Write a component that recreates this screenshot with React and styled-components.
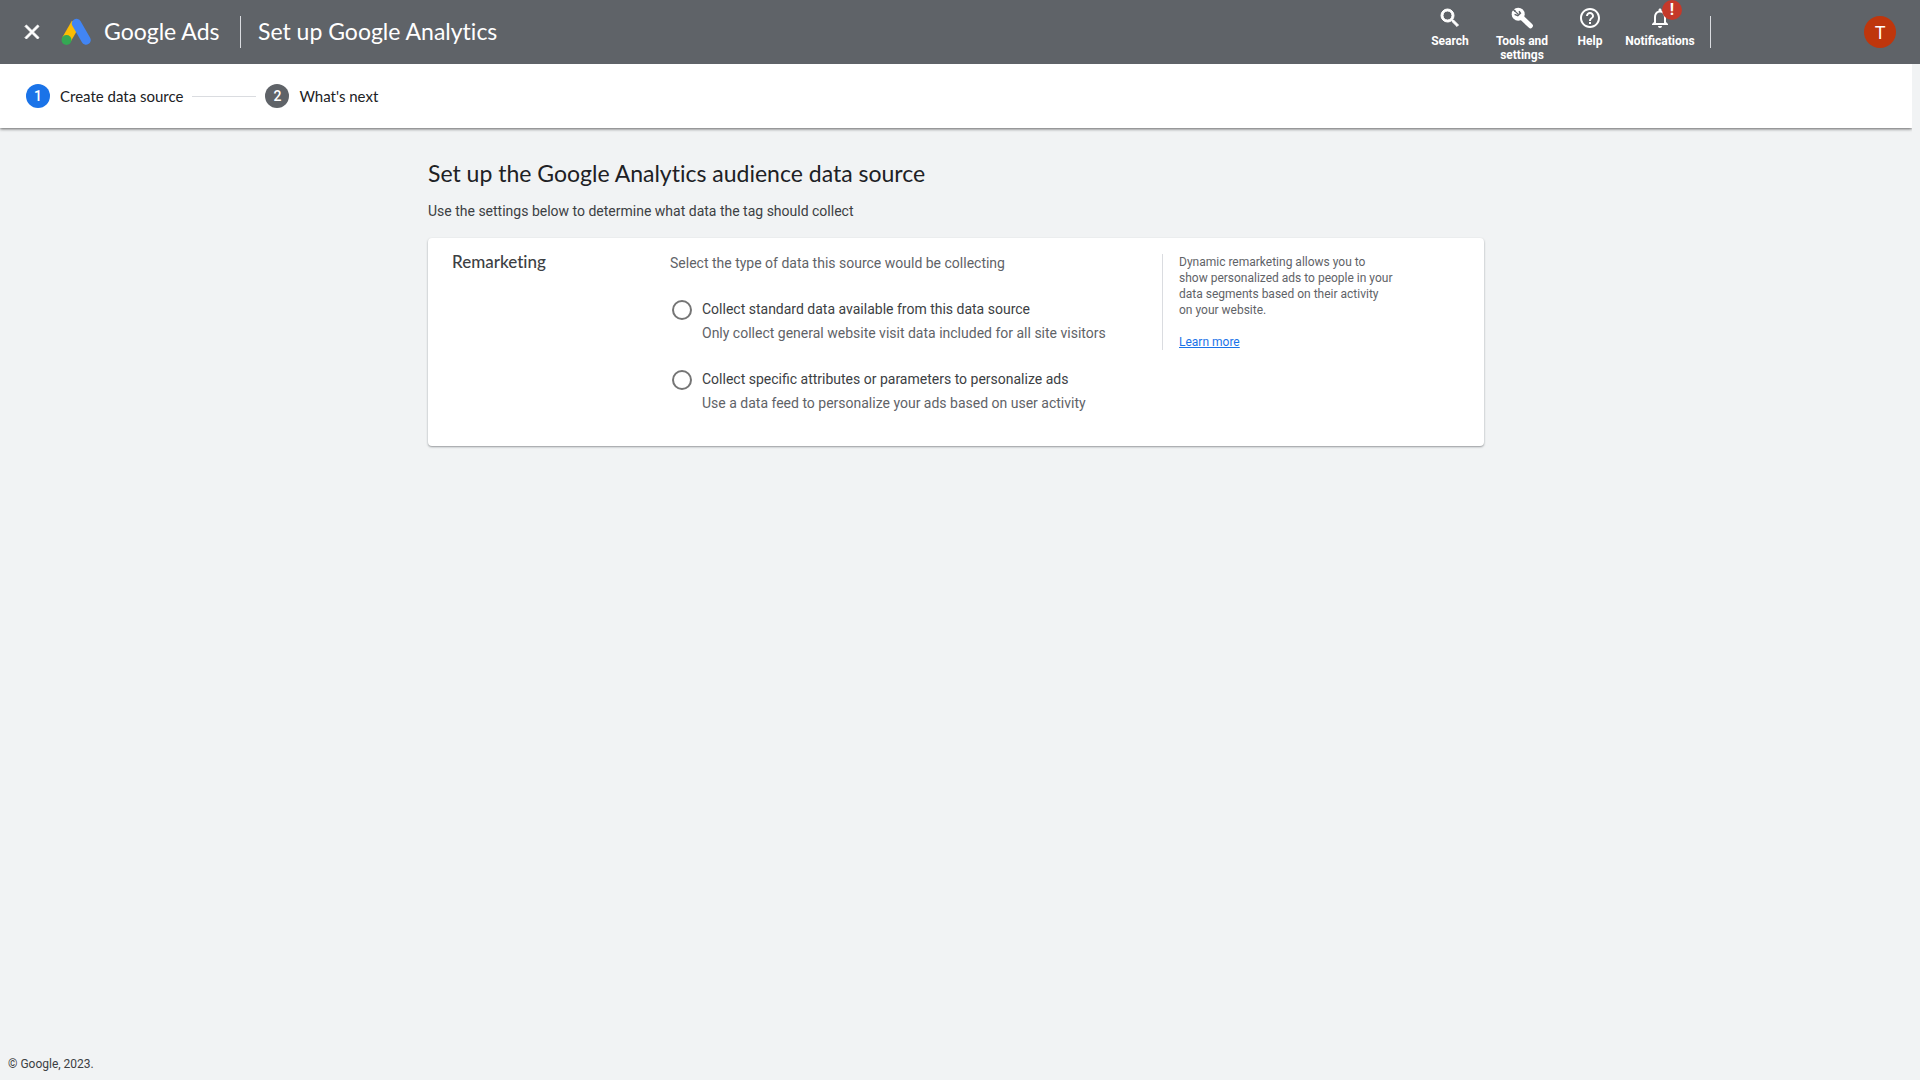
import React from "react";
import styled, { createGlobalStyle, css } from "styled-components";
import {
  MdClose,
  MdSearch,
  MdHelpOutline,
  MdNotificationsNone,
} from "react-icons/md";

const options = [
  {
    id: "standard",
    title: "Collect standard data available from this data source",
    text: "Only collect general website visit data included for all site visitors",
  },
  {
    id: "specific",
    title: "Collect specific attributes or parameters to personalize ads",
    text: "Use a data feed to personalize your ads based on user activity",
  },
];

function AdsLogo() {
  return (
    <svg width="30" height="28" viewBox="0 0 30 28" aria-hidden="true">
      <path d="M15 5 5.500 21.500" stroke="#fbbc04" strokeWidth="9.500" />
      <path
        d="M15.500 5.500 25 22"
        stroke="#4285f4"
        strokeWidth="9.500"
        strokeLinecap="round"
      />
      <circle cx="5.500" cy="22" r="5" fill="#34a853" />
    </svg>
  );
}

function WrenchIcon() {
  return (
    <svg width="24" height="24" viewBox="0 0 24 24" fill="none">
      <circle cx="8.200" cy="8.200" r="6.500" fill="currentColor" />
      <path
        d="M9 9 20.400 19.800"
        stroke="currentColor"
        strokeWidth="5"
        strokeLinecap="round"
      />
      <path
        d="M2 2.500 5.400 5.400M4.600 8.400 7.800 9.600 10.400 7.200 9 5.200"
        stroke="#5f6368"
        strokeWidth="1.500"
      />
      <path d="M4.300 4.600 8.300 8.200" stroke="#5f6368" strokeWidth="1.200" />
    </svg>
  );
}

function Header() {
  return (
    <TopBar>
      <CloseButton aria-label="Close">
        <CloseIcon size={24} />
      </CloseButton>
      <Brand href="#">
        <AdsLogo />
        <BrandName>Google Ads</BrandName>
      </Brand>
      <Divider />
      <PageTitle>Set up Google Analytics</PageTitle>
      <Tools>
        <ToolButton $width={72}>
          <SearchIcon size={24} />
          Search
        </ToolButton>
        <ToolButton $width={72}>
          <WrenchIcon />
          Tools and settings
        </ToolButton>
        <ToolButton $width={64}>
          <MdHelpOutline size={24} />
          Help
        </ToolButton>
        <ToolButton $width={76}>
          <MdNotificationsNone size={24} />
          <Badge>!</Badge>
          Notifications
        </ToolButton>
      </Tools>
      <Divider />
      <Avatar aria-label="Account">T</Avatar>
    </TopBar>
  );
}

function Steps() {
  return (
    <StepBar>
      <Step>
        <StepNumber $active>1</StepNumber>
        <StepLabel>Create data source</StepLabel>
      </Step>
      <StepLine />
      <Step>
        <StepNumber>2</StepNumber>
        <StepLabel>What's next</StepLabel>
      </Step>
    </StepBar>
  );
}

export default function App() {
  return (
    <Page>
      <GlobalStyle />
      <Header />
      <Body>
        <Steps />
        <Content>
          <Heading>Set up the Google Analytics audience data source</Heading>
          <Intro>
            Use the settings below to determine what data the tag should collect
          </Intro>
          <Card>
            <CardTitle>Remarketing</CardTitle>
            <Fields>
              <Legend id="data-type">
                Select the type of data this source would be collecting
              </Legend>
              <Options role="radiogroup" aria-labelledby="data-type">
                {options.map((option) => (
                  <Option key={option.id} htmlFor={option.id}>
                    <Radio type="radio" name="data-type" id={option.id} />
                    <OptionText>
                      <OptionTitle>{option.title}</OptionTitle>
                      <span>{option.text}</span>
                    </OptionText>
                  </Option>
                ))}
              </Options>
            </Fields>
            <Help>
              <p>
                Dynamic remarketing allows you to
                <br />
                show personalized ads to people in your
                <br />
                data segments based on their activity
                <br />
                on your website.
              </p>
              <a href="#">Learn more</a>
            </Help>
          </Card>
        </Content>
        <Footer>© Google, 2023.</Footer>
      </Body>
    </Page>
  );
}

const GlobalStyle = createGlobalStyle`
  * {
    box-sizing: border-box;
  }

  body {
    margin: 0;
    background: #f1f3f4;
    color: #3c4043;
    font-family: Roboto, "Liberation Sans", sans-serif;
    font-size: 14px;
  }

  h1, h2, h3, p {
    margin: 0;
    font-weight: 400;
  }

  button {
    border: 0;
    padding: 0;
    background: none;
    color: inherit;
    font-family: inherit;
    cursor: pointer;
  }
`;

const displayFont = css`
  font-family: "Google Sans", Lato, sans-serif;
  font-variant-ligatures: none;
`;

/* thickens the glyph but not the empty bounding path */
const boldIcon = css`
  path:not([fill="none"]) {
    stroke-width: 1;
  }
`;

const CloseIcon = styled(MdClose)`
  ${boldIcon}
`;

const SearchIcon = styled(MdSearch)`
  ${boldIcon}
`;

const Page = styled.div`
  min-height: 100vh;
  display: flex;
  flex-direction: column;
`;

const TopBar = styled.header`
  height: 64px;
  padding: 0 24px 0 20px;
  display: flex;
  align-items: center;
  background: #5f6368;
  color: #fff;
`;

const CloseButton = styled.button`
  width: 24px;
  height: 24px;
  flex: none;
`;

const Brand = styled.a`
  margin-left: 17px;
  width: 179px;
  display: flex;
  align-items: center;
  gap: 13px;
  color: #fff;
  text-decoration: none;
`;

const BrandName = styled.span`
  ${displayFont}
  padding-bottom: 2px;
  font-size: 23px;
  white-space: nowrap;
`;

const Divider = styled.div`
  width: 1px;
  height: 32px;
  background: #dadce0;
`;

const PageTitle = styled.h1`
  ${displayFont}
  margin-left: 17px;
  padding-bottom: 2px;
  font-size: 23px;
  white-space: nowrap;
`;

const Tools = styled.nav`
  margin-left: auto;
  margin-right: 12px;
  height: 100%;
  display: flex;
`;

const ToolButton = styled.button`
  position: relative;
  width: ${(props) => props.$width}px;
  height: 100%;
  padding-top: 6px;
  display: flex;
  flex-direction: column;
  align-items: center;
  gap: 4px;
  font-size: 12px;
  font-weight: 700;
  line-height: 14px;

  svg {
    flex: none;
  }
`;

const Badge = styled.span`
  position: absolute;
  top: 0;
  right: 16px;
  width: 20px;
  height: 20px;
  border-radius: 50%;
  background: #c5392a;
  font-size: 16px;
  line-height: 20px;
`;

const Avatar = styled.button`
  margin-left: 153px;
  width: 32px;
  height: 32px;
  flex: none;
  border-radius: 50%;
  background: #bf360c;
  font-size: 18px;
`;

const Body = styled.div`
  flex: 1;
  margin-right: 8px;
  display: flex;
  flex-direction: column;
`;

const StepBar = styled.nav`
  height: 64px;
  padding: 0 26px;
  display: flex;
  align-items: center;
  gap: 9px;
  background: #fff;
  box-shadow: 0 1px 3px rgba(0, 0, 0, 0.6);
  clip-path: inset(0 0 -8px 0);
`;

const Step = styled.div`
  display: flex;
  align-items: center;
  gap: 10px;
`;

const StepNumber = styled.span`
  width: 24px;
  height: 24px;
  border-radius: 50%;
  background: ${(props) => (props.$active ? "#1a73e8" : "#5f6368")};
  color: #fff;
  font-weight: 500;
  line-height: 24px;
  text-align: center;
`;

const StepLabel = styled.span`
  ${displayFont}
  color: #202124;
  font-size: 15px;
`;

const StepLine = styled.div`
  width: 64px;
  height: 1px;
  background: #dadce0;
`;

const Content = styled.main`
  width: 100%;
  max-width: 1056px;
  margin: 0 auto;
  padding-top: 31px;
`;

const Heading = styled.h2`
  ${displayFont}
  color: #202124;
  font-size: 23px;
  line-height: 28px;
`;

const Intro = styled.p`
  padding: 13px 0 16px;
  line-height: 22px;
`;

const Card = styled.section`
  min-height: 208px;
  padding: 16px 24px;
  display: flex;
  align-items: flex-start;
  border-radius: 4px;
  background: #fff;
  box-shadow: 0 1px 2px rgba(60, 64, 67, 0.5);
`;

const CardTitle = styled.h3`
  ${displayFont}
  width: 218px;
  font-size: 17px;
  font-weight: 500;
  line-height: 16px;
`;

const Fields = styled.div`
  width: 492px;
  color: #5f6368;
`;

const Legend = styled.p`
  line-height: 18px;
`;

const Options = styled.div`
  padding-top: 25px;
  display: flex;
  flex-direction: column;
  gap: 22px;
`;

const Option = styled.label`
  padding-left: 2px;
  display: flex;
  gap: 10px;
  cursor: pointer;
`;

const Radio = styled.input`
  appearance: none;
  width: 20px;
  height: 20px;
  margin: 3px 0 0;
  border: 2px solid #757575;
  border-radius: 50%;

  &:checked {
    border: 6px solid #1a73e8;
  }
`;

const OptionText = styled.span`
  display: flex;
  flex-direction: column;
  line-height: 24px;
`;

const OptionTitle = styled.span`
  color: #3c4043;
`;

const Help = styled.aside`
  width: 248px;
  padding-left: 16px;
  border-left: 1px solid #dadce0;
  color: #5f6368;
  font-size: 12px;
  line-height: 16px;

  p {
    margin-bottom: 16px;
  }

  a {
    color: #1a73e8;
  }
`;

const Footer = styled.footer`
  margin-top: auto;
  padding: 8px;
  font-size: 12px;
  line-height: 16px;
`;
